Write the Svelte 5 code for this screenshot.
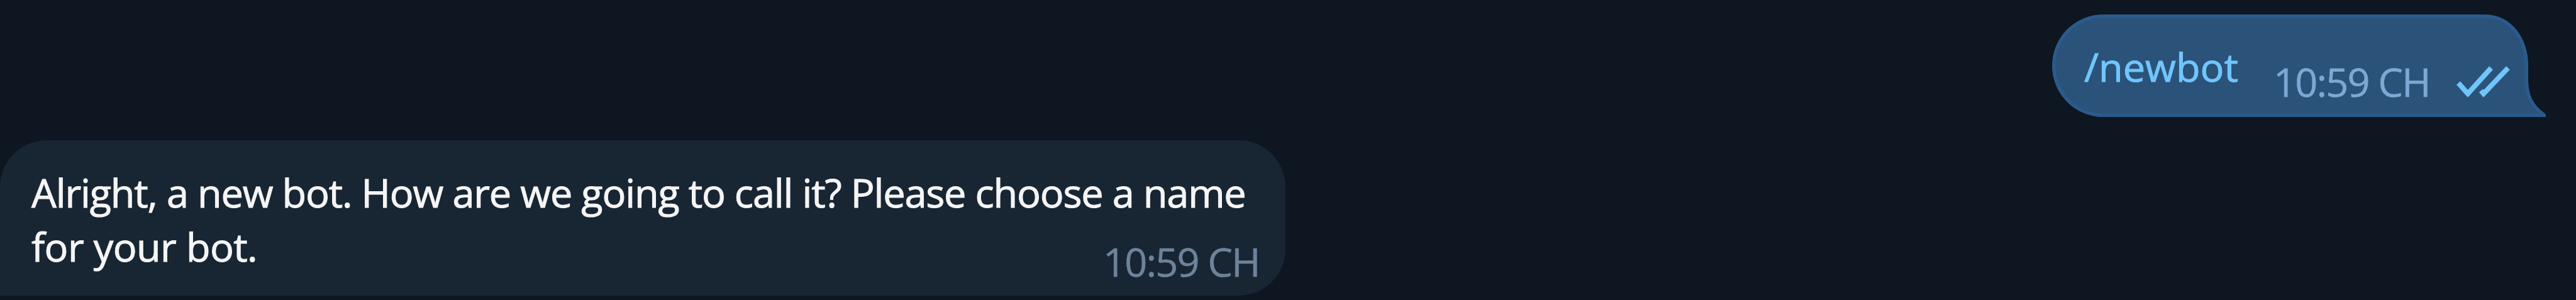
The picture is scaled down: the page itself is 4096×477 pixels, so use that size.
<script lang="ts">
  const command = "/newbot";
  const lines = [
    "Alright, a new bot. How are we going to call it? Please choose a name",
    "for your bot.",
  ];
  const time = "10:59 CH";
</script>

<main class="chat">
  <div class="message outgoing">
    <svg class="shape" viewBox="0 0 786 163" aria-hidden="true">
      <defs>
        <clipPath id="bubble">
          <path
            id="outline"
            d="M81.500 0H688C730 0 757 38 757 80V103C757 130 766 144 783 157Q786 160 785 163H81.500A81.500 81.500 0 0 1 81.500 0Z"
          />
        </clipPath>
      </defs>
      <use href="#outline" class="fill" clip-path="url(#bubble)" />
    </svg>
    <span class="command">{command}</span>
    <span class="time">{time}</span>
    <svg class="checks" viewBox="0 0 86 50" aria-hidden="true">
      <path d="M3 28L18 45L55 4" />
      <path d="M39 40L43 45L82 4" />
    </svg>
  </div>

  <div class="message incoming">
    <p>
      {#each lines as line}
        <span class="line">{line}</span>
      {/each}
    </p>
    <span class="time">{time}</span>
  </div>
</main>

<style>
  :global(body) {
    margin: 0;
    background: #0e1621;
  }
  .chat {
    box-sizing: border-box;
    display: flex;
    flex-direction: column;
    gap: 37px;
    height: 477px;
    padding-top: 23px;
    overflow: hidden;
    background: #0e1621;
    font-family: "Open Sans", "Noto Sans", sans-serif;
    font-size: 63px;
    line-height: 86px;
    white-space: nowrap;
  }
  .message {
    box-sizing: border-box;
    display: flex;
    position: relative;
  }

  .outgoing {
    align-self: flex-end;
    align-items: flex-start;
    width: 786px;
    height: 163px;
    margin-right: 47px;
    padding-left: 51px;
  }
  .shape {
    position: absolute;
    inset: 0;
    width: 786px;
    height: 163px;
  }
  .fill {
    fill: #2b5278;
    stroke: #2b5a8c;
    stroke-width: 11;
  }
  .command,
  .outgoing .time,
  .checks {
    position: relative;
  }
  .command {
    width: 301px;
    margin-top: 40px;
    color: #70c5fc;
    -webkit-text-stroke: 1px;
  }
  .time {
    color: #6d839a;
    letter-spacing: -1.8px;
    -webkit-text-stroke: 0.6px;
  }
  .outgoing .time {
    width: 291px;
    margin-top: 64px;
    color: #7da8d3;
  }
  .checks {
    flex: none;
    width: 86px;
    height: 50px;
    margin-top: 81px;
  }
  .checks path {
    fill: none;
    stroke: #70c5fc;
    stroke-width: 8;
  }

  .incoming {
    align-items: flex-start;
    width: 2044px;
    height: 247px;
    padding-left: 50px;
    border-radius: 74px 74px 74px 0;
    background: #182533;
  }
  p {
    width: 1704px;
    margin: 40px 0 0;
    color: #f5f5f5;
    -webkit-text-stroke: 1px;
  }
  .line {
    display: block;
    letter-spacing: -1.16px;
  }
  .line:last-child {
    letter-spacing: -0.6px;
  }
  .incoming .time {
    margin-top: 150px;
  }
</style>
